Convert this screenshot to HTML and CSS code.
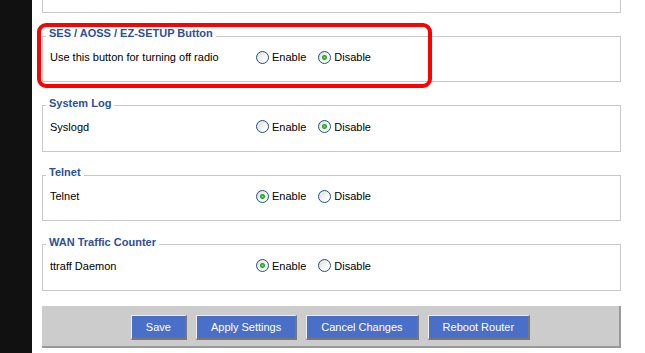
FILE: index.html
```html
<!DOCTYPE html>
<html lang="en">

<head>
    <meta charset="UTF-8">
    <title>Services</title>
    <link rel="stylesheet" href="styles.css">
</head>

<body>
    <div class="side"></div>
    <main id="content">
        <div class="setting cut"></div>

        <fieldset class="setting">
            <legend>SES / AOSS / EZ-SETUP Button</legend>
            <div class="row">
                <span class="label">Use this button for turning off radio</span>
                <label class="opt"><input type="radio" name="ses" value="1"> Enable</label>
                <label class="opt"><input type="radio" name="ses" value="0" checked> Disable</label>
            </div>
        </fieldset>

        <fieldset class="setting">
            <legend>System Log</legend>
            <div class="row">
                <span class="label">Syslogd</span>
                <label class="opt"><input type="radio" name="syslogd" value="1"> Enable</label>
                <label class="opt"><input type="radio" name="syslogd" value="0" checked> Disable</label>
            </div>
        </fieldset>

        <fieldset class="setting">
            <legend>Telnet</legend>
            <div class="row">
                <span class="label">Telnet</span>
                <label class="opt"><input type="radio" name="telnet" value="1" checked> Enable</label>
                <label class="opt"><input type="radio" name="telnet" value="0"> Disable</label>
            </div>
        </fieldset>

        <fieldset class="setting">
            <legend>WAN Traffic Counter</legend>
            <div class="row">
                <span class="label">ttraff Daemon</span>
                <label class="opt"><input type="radio" name="ttraff" value="1" checked> Enable</label>
                <label class="opt"><input type="radio" name="ttraff" value="0"> Disable</label>
            </div>
        </fieldset>

        <div class="submit-footer">
            <input type="button" class="button" value="Save" />
            <input type="button" class="button" value="Apply Settings" />
            <input type="button" class="button" value="Cancel Changes" />
            <input type="button" class="button" value="Reboot Router" />
        </div>

        <!-- annotation round the SES setting -->
        <div class="mark"></div>
    </main>
</body>

</html>
```

FILE: styles.css
```css
body {
    margin: 0;
    display: flex;
    background: #fff;
    font-family: 'Liberation Sans', Arial, sans-serif;
    font-size: 11px;
    color: #000;
    height: 353px;
    overflow: hidden;
}

.side {
    width: 32px;
    flex: none;
    background: #111;
}

#content {
    position: relative;
    padding-left: 10px;
    width: 579px;
}

.setting {
    border: 1px solid #c8c8c8;
    margin: 0 0 14.66px 0;
    padding: 0 7px;
    min-width: 0;
}

.setting.cut {
    border-top: none;
    height: 12px;
    padding: 0;
    margin-bottom: 14px;
}

legend {
    color: #2b509b;
    font-weight: bold;
    font-size: 11px;
    line-height: 13px;
    padding: 0 3px 5px 3px;
    margin-left: -4px;
}

.row {
    display: flex;
    align-items: center;
    height: 20px;
    padding: 2px 0 14px 0;
}

.label {
    width: 206px;
    flex: none;
}

.opt {
    display: flex;
    align-items: center;
    margin-right: 12px;
}

.opt input {
    -webkit-appearance: none;
    appearance: none;
    width: 13px;
    height: 13px;
    margin: 0 3px 0 0;
    border: 1px solid #1c5180;
    border-radius: 50%;
    background: linear-gradient(135deg, #dcdcd7, #fff 75%);
}

.opt input:checked {
    background: radial-gradient(circle, #6fdc6f 0, #21a121 2px, transparent 3px),
        linear-gradient(135deg, #dcdcd7, #fff 75%);
}

.submit-footer {
    display: flex;
    justify-content: center;
    gap: 9px;
    background: #ccc;
    border-right: 2px solid #999;
    border-bottom: 2px solid #999;
    padding: 9px 0 6px 0;
    height: 25px;
}

.button {
    height: 25px;
    padding: 0 14px;
    background: #4a6fc8;
    color: #fff;
    font-family: 'Liberation Sans', Arial, sans-serif;
    font-size: 11px;
    border: 1px solid;
    border-color: #eee #777 #777 #eee;
    border-width: 1px 2px 2px 1px;
}

.mark {
    position: absolute;
    left: 5px;
    top: 23px;
    width: 387px;
    height: 57px;
    border: 4px solid #f00;
    border-radius: 9px;
}
```
